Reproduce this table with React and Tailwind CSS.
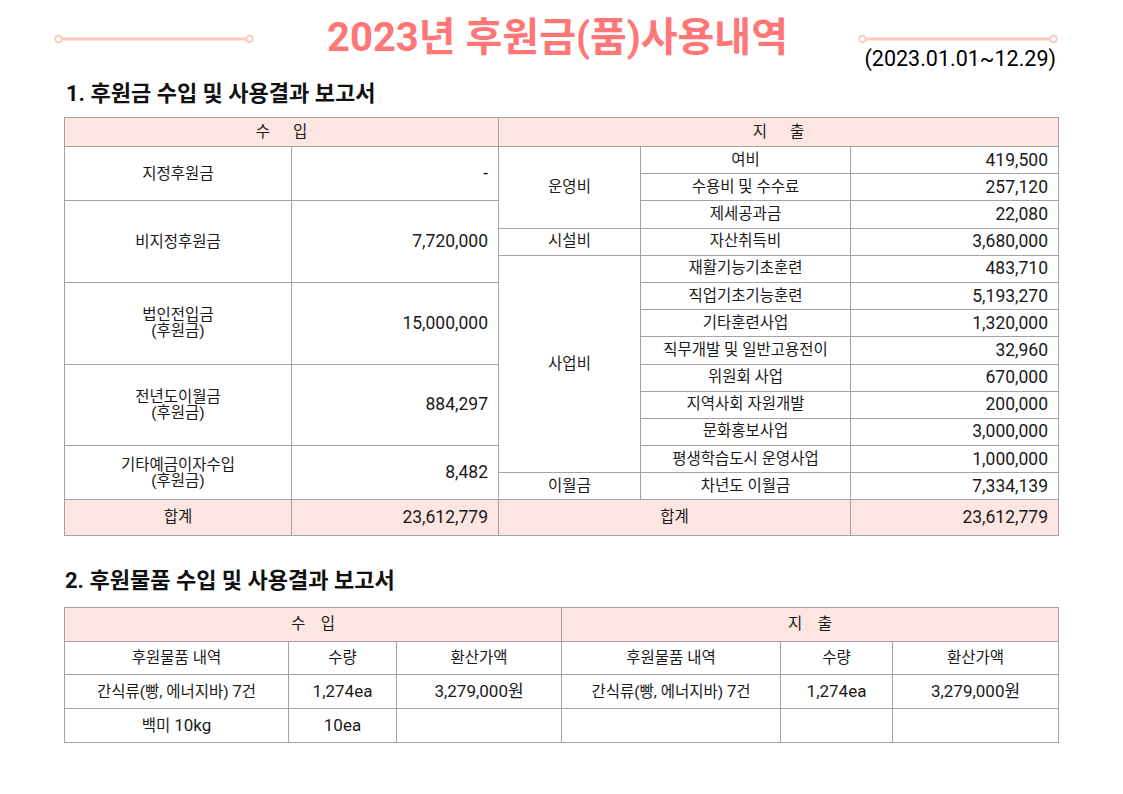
import React from "react";

const font = { fontFamily: "Roboto, 'Noto Sans CJK KR', sans-serif" };

const Deco = () => (
  <svg width="200" height="10" viewBox="0 0 200 10">
    <line x1="8" y1="5" x2="192" y2="5" stroke="#ffcabe" strokeWidth="3" />
    <circle cx="4.5" cy="5" r="3.3" fill="#fff" stroke="#ffcabe" strokeWidth="2" />
    <circle cx="195.5" cy="5" r="3.3" fill="#fff" stroke="#ffcabe" strokeWidth="2" />
  </svg>
);

const line = "border-[1.5px] border-[#a3a3a3] align-middle";
const td = line + " text-center px-2";
const tdR = line + " text-right pr-[10px] text-[17.5px]";
const tdN = line + " text-center text-[17px]";
const head = line + " bg-[#fde5e1] text-center";

const spend = [
  ["여비", "419,500"],
  ["수용비 및 수수료", "257,120"],
  ["제세공과금", "22,080"],
  ["자산취득비", "3,680,000"],
  ["재활기능기초훈련", "483,710"],
  ["직업기초기능훈련", "5,193,270"],
  ["기타훈련사업", "1,320,000"],
  ["직무개발 및 일반고용전이", "32,960"],
  ["위원회 사업", "670,000"],
  ["지역사회 자원개발", "200,000"],
  ["문화홍보사업", "3,000,000"],
  ["평생학습도시 운영사업", "1,000,000"],
  ["차년도 이월금", "7,334,139"],
];

// 수입 쪽: 시작 행 -> [항목, 금액, rowSpan]
const income = {
  0: ["지정후원금", "-", 2],
  2: ["비지정후원금", "7,720,000", 3],
  5: ["법인전입금\n(후원금)", "15,000,000", 3],
  8: ["전년도이월금\n(후원금)", "884,297", 3],
  11: ["기타예금이자수입\n(후원금)", "8,482", 2],
};

const category = {
  0: ["운영비", 3],
  3: ["시설비", 1],
  4: ["사업비", 8],
  12: ["이월금", 1],
};

const Item = () => (
  <>
    간식류(빵, 에너지바) <span className="text-[16.5px]">7</span>건
  </>
);

export default function App() {
  return (
    <div className="w-[1123px] h-[794px] bg-white text-[#1a1a1a]" style={font}>
      <div className="flex items-start pt-[12px] pl-[54px]">
        <div className="mt-[22px]">
          <Deco />
        </div>
        <h1 className="ml-[73px] text-[40px] font-bold leading-[52px] text-[#ff7676] whitespace-nowrap">
          2023년 후원금(품)사용내역
        </h1>
        <div className="ml-[70px] mt-[22px] flex flex-col items-end">
          <Deco />
          <div className="mt-[3px] mr-[2px] text-[21.5px] leading-[24px] text-black whitespace-nowrap">
            (2023.01.01~12.29)
          </div>
        </div>
      </div>

      <h2 className="mt-[9px] ml-[66px] text-[22px] font-bold leading-[28px] text-[#111]">
        1. 후원금 수입 및 사용결과 보고서
      </h2>

      <table className="mt-[9px] ml-[64px] w-[994px] table-fixed border-collapse text-[15.5px] leading-[17px]">
        <colgroup>
          <col className="w-[227px]" />
          <col className="w-[207px]" />
          <col className="w-[142px]" />
          <col className="w-[210px]" />
          <col className="w-[208px]" />
        </colgroup>
        <tbody>
          <tr className="h-[29px]">
            <td colSpan={2} className={head}>
              <span className="whitespace-pre">수      입</span>
            </td>
            <td colSpan={3} className={head}>
              <span className="whitespace-pre">지      출</span>
            </td>
          </tr>
          {spend.map(([name, amt], i) => (
            <tr key={i} className="h-[27.2px]">
              {income[i] && (
                <>
                  <td rowSpan={income[i][2]} className={td + " whitespace-pre-line leading-[16px]"}>
                    {income[i][0]}
                  </td>
                  <td rowSpan={income[i][2]} className={tdR}>
                    {income[i][1]}
                  </td>
                </>
              )}
              {category[i] && (
                <td rowSpan={category[i][1]} className={td}>
                  {category[i][0]}
                </td>
              )}
              <td className={td}>{name}</td>
              <td className={tdR}>{amt}</td>
            </tr>
          ))}
          <tr className="h-[36px] bg-[#fde5e1]">
            <td className={td}>합계</td>
            <td className={tdR}>23,612,779</td>
            <td colSpan={2} className={td}>합계</td>
            <td className={tdR}>23,612,779</td>
          </tr>
        </tbody>
      </table>

      <h2 className="mt-[31px] ml-[65px] text-[22px] font-bold leading-[28px] text-[#111]">
        2. 후원물품 수입 및 사용결과 보고서
      </h2>

      <table className="mt-[12px] ml-[64px] w-[994px] table-fixed border-collapse text-[15.5px] leading-[17px]">
        <colgroup>
          <col className="w-[224px]" />
          <col className="w-[108px]" />
          <col className="w-[165px]" />
          <col className="w-[219px]" />
          <col className="w-[112px]" />
          <col className="w-[166px]" />
        </colgroup>
        <tbody>
          <tr className="h-[34px]">
            <td colSpan={3} className={head}>
              <span className="whitespace-pre">수    입</span>
            </td>
            <td colSpan={3} className={head}>
              <span className="whitespace-pre">지    출</span>
            </td>
          </tr>
          <tr className="h-[33px]">
            <td className={td}>후원물품 내역</td>
            <td className={td}>수량</td>
            <td className={td}>환산가액</td>
            <td className={td}>후원물품 내역</td>
            <td className={td}>수량</td>
            <td className={td}>환산가액</td>
          </tr>
          <tr className="h-[34px]">
            <td className={td}>
              <Item />
            </td>
            <td className={tdN}>1,274ea</td>
            <td className={tdN}>3,279,000원</td>
            <td className={td}>
              <Item />
            </td>
            <td className={tdN}>1,274ea</td>
            <td className={tdN}>3,279,000원</td>
          </tr>
          <tr className="h-[34px]">
            <td className={td}>
              백미 <span className="text-[17px]">10kg</span>
            </td>
            <td className={tdN}>10ea</td>
            <td className={td}></td>
            <td className={td}></td>
            <td className={td}></td>
            <td className={td}></td>
          </tr>
        </tbody>
      </table>
    </div>
  );
}
